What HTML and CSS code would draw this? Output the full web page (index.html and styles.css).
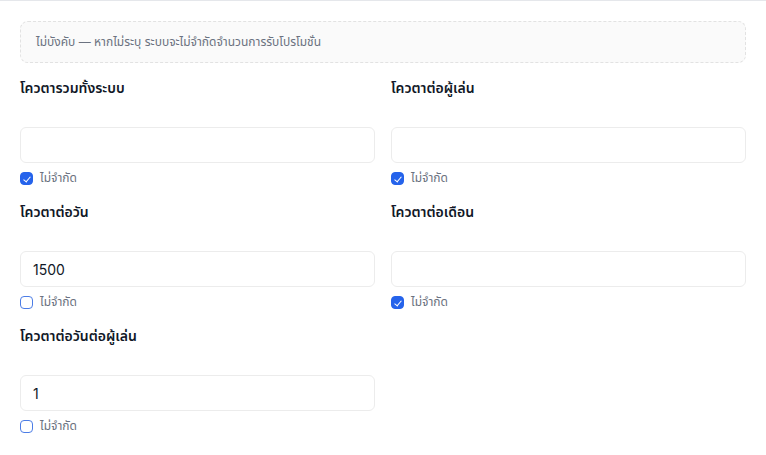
FILE: index.html
```html
<!DOCTYPE html>
<html lang="th">
  <head>
    <meta charset="UTF-8" />
    <meta name="viewport" content="width=device-width, initial-scale=1.0" />
    <title>Quota Settings</title>
    <link rel="stylesheet" href="styles.css">
  </head>
  <body>
    <div class="quota-section">
      <div class="note">ไม่บังคับ — หากไม่ระบุ ระบบจะไม่จำกัดจำนวนการรับโปรโมชั่น</div>

      <div class="quota-grid">
        <div class="field">
          <div class="field-head"><label for="totalQuota">โควตารวมทั้งระบบ</label></div>
          <input type="text" id="totalQuota" class="quota-input" />
          <label class="unlimited"><input type="checkbox" checked /> <span>ไม่จำกัด</span></label>
        </div>
        <div class="field">
          <div class="field-head"><label for="playerQuota">โควตาต่อผู้เล่น</label></div>
          <input type="text" id="playerQuota" class="quota-input" />
          <label class="unlimited"><input type="checkbox" checked /> <span>ไม่จำกัด</span></label>
        </div>
        <div class="field">
          <div class="field-head"><label for="dailyQuota">โควตาต่อวัน</label></div>
          <input type="text" id="dailyQuota" class="quota-input" value="1500" />
          <label class="unlimited"><input type="checkbox" /> <span>ไม่จำกัด</span></label>
        </div>
        <div class="field">
          <div class="field-head"><label for="monthlyQuota">โควตาต่อเดือน</label></div>
          <input type="text" id="monthlyQuota" class="quota-input" />
          <label class="unlimited"><input type="checkbox" checked /> <span>ไม่จำกัด</span></label>
        </div>
        <div class="field">
          <div class="field-head"><label for="dailyPlayerQuota">โควตาต่อวันต่อผู้เล่น</label></div>
          <input type="text" id="dailyPlayerQuota" class="quota-input" value="1" />
          <label class="unlimited"><input type="checkbox" /> <span>ไม่จำกัด</span></label>
        </div>
      </div>
    </div>
  </body>
</html>
```

FILE: styles.css
```css
body {
  margin: 0;
  font-family: Inter, "Noto Sans Thai", "Noto Sans Thai UI", "Noto Sans", sans-serif;
  background-color: #ffffff;
  color: #111827;
}

.quota-section {
  border-top: 1px solid #e5e7eb;
  padding: 20px 20px;
}

.note {
  border: 1px dashed #e2e2e2;
  border-radius: 8px;
  background-color: #fafafa;
  padding: 11px 15px;
  font-size: 12px;
  line-height: 18px;
  color: #6b7280;
}

.quota-grid {
  margin-top: 14px;
  display: grid;
  grid-template-columns: 1fr 1fr;
  column-gap: 16px;
  row-gap: 14px;
}

.field {
  display: flex;
  flex-direction: column;
}

.field-head {
  min-height: 50px;
}

.field-head label {
  font-size: 14px;
  font-weight: 600;
  line-height: 20px;
}

.quota-input {
  box-sizing: border-box;
  height: 36px;
  border: 1px solid #ececec;
  border-radius: 6px;
  padding: 0 12px;
  font-family: inherit;
  font-size: 14px;
  color: #111827;
  background: #fff;
  outline: none;
}

.unlimited {
  margin-top: 6px;
  height: 18px;
  display: flex;
  align-items: center;
  gap: 7px;
  font-size: 12px;
  color: #6b7280;
  cursor: pointer;
}

.unlimited input {
  appearance: none;
  -webkit-appearance: none;
  margin: 0;
  width: 13px;
  height: 13px;
  box-sizing: border-box;
  border: 1px solid #4c7de6;
  border-radius: 4px;
  background: #fff;
  position: relative;
  flex-shrink: 0;
}

.unlimited input:checked {
  background-color: #2563eb;
  border-color: #2563eb;
}

.unlimited input:checked::after {
  content: "";
  position: absolute;
  left: 4px;
  top: 2px;
  width: 3px;
  height: 6px;
  border: solid #fff;
  border-width: 0 1px 1px 0;
  transform: rotate(40deg);
}
```
